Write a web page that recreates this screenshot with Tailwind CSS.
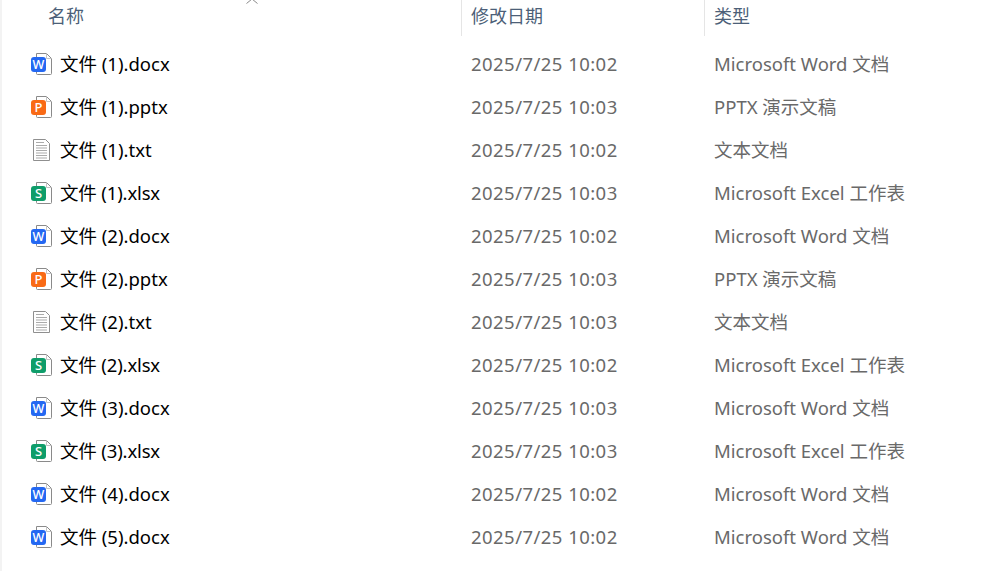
<!DOCTYPE html>
<html lang="zh"><head><meta charset="utf-8"><script src="https://cdn.jsdelivr.net/npm/@tailwindcss/browser@4"></script></head>
<body class="bg-white overflow-hidden">
<svg width="0" height="0" class="absolute">
<defs>
<symbol id="page" viewBox="0 0 22 24"><path d="M6.500 1.500H16.500L21.500 6.500V21.500a1 1 0 0 1-1 1H7.500a1 1 0 0 1-1-1Z" fill="#fff" stroke="#8a8a8a" stroke-width="1"/><path d="M16.500 1.500V6.500H21.500" fill="none" stroke="#c4c4c4" stroke-width="1"/></symbol>
<symbol id="txt" viewBox="0 0 22 24"><path d="M3.500 1.500H15.500L19.500 5.500V22.500H3.500Z" fill="#fff" stroke="#8f8f8f"/><path d="M6 4.500H14M6 7.500H17M6 10H17M6 12.500H17M6 15H17M6 17.500H17M6 20H17" stroke="#ababab" stroke-width="1"/></symbol>
</defs></svg>
<div class="relative w-[991px] h-[571px] overflow-hidden border-l-2 border-[#f3f3f3] font-['Noto_Sans','Noto_Sans_CJK_SC',sans-serif] text-[18.5px]">
<svg class="absolute left-[243px] top-0" width="14" height="4" viewBox="0 0 14 4"><path d="M1.500 3.500 7 -1 12.500 3.500" fill="none" stroke="#8a8a8a"/></svg>
<div class="flex h-[36px] text-[18px] text-[#4c5f78]">
<div class="w-[459px] pl-[46px] pt-[2px] leading-[28px]">名称</div>
<div class="w-[243px] border-l border-[#e5e5e5] pl-[9px] pt-[2px] leading-[28px]">修改日期</div>
<div class="flex-1 border-l border-[#e5e5e5] pl-[9px] pt-[2px] leading-[28px]">类型</div>
</div>
<div class="pt-[6px] text-[#696969]">
<div class="flex h-[43px] items-center"><div class="relative w-[22px] h-[24px] ml-[28px] mr-[8px]"><svg class="absolute inset-0" width="22" height="24"><use href="#page"/></svg><div class="absolute left-[1px] top-[5px] w-[15px] h-[15px] rounded-[3px] bg-[#2468f2] text-white text-[12.5px] font-medium leading-[15px] text-center">W</div></div><div class="w-[411px] text-black">文件 (1).docx</div><div class="w-[243px] tracking-[0.45px]">2025/7/25 10:02</div><div>Microsoft Word 文档</div></div>
<div class="flex h-[43px] items-center"><div class="relative w-[22px] h-[24px] ml-[28px] mr-[8px]"><svg class="absolute inset-0" width="22" height="24"><use href="#page"/></svg><div class="absolute left-[1px] top-[5px] w-[15px] h-[15px] rounded-[3px] bg-[#f96a16] text-white text-[13px] font-medium leading-[15px] text-center">P</div></div><div class="w-[411px] text-black">文件 (1).pptx</div><div class="w-[243px] tracking-[0.45px]">2025/7/25 10:03</div><div>PPTX 演示文稿</div></div>
<div class="flex h-[43px] items-center"><div class="relative w-[22px] h-[24px] ml-[28px] mr-[8px]"><svg class="absolute inset-0" width="22" height="24"><use href="#txt"/></svg></div><div class="w-[411px] text-black">文件 (1).txt</div><div class="w-[243px] tracking-[0.45px]">2025/7/25 10:02</div><div>文本文档</div></div>
<div class="flex h-[43px] items-center"><div class="relative w-[22px] h-[24px] ml-[28px] mr-[8px]"><svg class="absolute inset-0" width="22" height="24"><use href="#page"/></svg><div class="absolute left-[1px] top-[5px] w-[15px] h-[15px] rounded-[3px] bg-[#0f9d6a] text-white text-[13px] font-medium leading-[15px] text-center">S</div></div><div class="w-[411px] text-black tracking-[-0.15px]">文件 (1).xlsx</div><div class="w-[243px] tracking-[0.45px]">2025/7/25 10:03</div><div>Microsoft Excel 工作表</div></div>
<div class="flex h-[43px] items-center"><div class="relative w-[22px] h-[24px] ml-[28px] mr-[8px]"><svg class="absolute inset-0" width="22" height="24"><use href="#page"/></svg><div class="absolute left-[1px] top-[5px] w-[15px] h-[15px] rounded-[3px] bg-[#2468f2] text-white text-[12.5px] font-medium leading-[15px] text-center">W</div></div><div class="w-[411px] text-black">文件 (2).docx</div><div class="w-[243px] tracking-[0.45px]">2025/7/25 10:02</div><div>Microsoft Word 文档</div></div>
<div class="flex h-[43px] items-center"><div class="relative w-[22px] h-[24px] ml-[28px] mr-[8px]"><svg class="absolute inset-0" width="22" height="24"><use href="#page"/></svg><div class="absolute left-[1px] top-[5px] w-[15px] h-[15px] rounded-[3px] bg-[#f96a16] text-white text-[13px] font-medium leading-[15px] text-center">P</div></div><div class="w-[411px] text-black">文件 (2).pptx</div><div class="w-[243px] tracking-[0.45px]">2025/7/25 10:03</div><div>PPTX 演示文稿</div></div>
<div class="flex h-[43px] items-center"><div class="relative w-[22px] h-[24px] ml-[28px] mr-[8px]"><svg class="absolute inset-0" width="22" height="24"><use href="#txt"/></svg></div><div class="w-[411px] text-black">文件 (2).txt</div><div class="w-[243px] tracking-[0.45px]">2025/7/25 10:03</div><div>文本文档</div></div>
<div class="flex h-[43px] items-center"><div class="relative w-[22px] h-[24px] ml-[28px] mr-[8px]"><svg class="absolute inset-0" width="22" height="24"><use href="#page"/></svg><div class="absolute left-[1px] top-[5px] w-[15px] h-[15px] rounded-[3px] bg-[#0f9d6a] text-white text-[13px] font-medium leading-[15px] text-center">S</div></div><div class="w-[411px] text-black tracking-[-0.15px]">文件 (2).xlsx</div><div class="w-[243px] tracking-[0.45px]">2025/7/25 10:02</div><div>Microsoft Excel 工作表</div></div>
<div class="flex h-[43px] items-center"><div class="relative w-[22px] h-[24px] ml-[28px] mr-[8px]"><svg class="absolute inset-0" width="22" height="24"><use href="#page"/></svg><div class="absolute left-[1px] top-[5px] w-[15px] h-[15px] rounded-[3px] bg-[#2468f2] text-white text-[12.5px] font-medium leading-[15px] text-center">W</div></div><div class="w-[411px] text-black">文件 (3).docx</div><div class="w-[243px] tracking-[0.45px]">2025/7/25 10:03</div><div>Microsoft Word 文档</div></div>
<div class="flex h-[43px] items-center"><div class="relative w-[22px] h-[24px] ml-[28px] mr-[8px]"><svg class="absolute inset-0" width="22" height="24"><use href="#page"/></svg><div class="absolute left-[1px] top-[5px] w-[15px] h-[15px] rounded-[3px] bg-[#0f9d6a] text-white text-[13px] font-medium leading-[15px] text-center">S</div></div><div class="w-[411px] text-black tracking-[-0.15px]">文件 (3).xlsx</div><div class="w-[243px] tracking-[0.45px]">2025/7/25 10:03</div><div>Microsoft Excel 工作表</div></div>
<div class="flex h-[43px] items-center"><div class="relative w-[22px] h-[24px] ml-[28px] mr-[8px]"><svg class="absolute inset-0" width="22" height="24"><use href="#page"/></svg><div class="absolute left-[1px] top-[5px] w-[15px] h-[15px] rounded-[3px] bg-[#2468f2] text-white text-[12.5px] font-medium leading-[15px] text-center">W</div></div><div class="w-[411px] text-black">文件 (4).docx</div><div class="w-[243px] tracking-[0.45px]">2025/7/25 10:02</div><div>Microsoft Word 文档</div></div>
<div class="flex h-[43px] items-center"><div class="relative w-[22px] h-[24px] ml-[28px] mr-[8px]"><svg class="absolute inset-0" width="22" height="24"><use href="#page"/></svg><div class="absolute left-[1px] top-[5px] w-[15px] h-[15px] rounded-[3px] bg-[#2468f2] text-white text-[12.5px] font-medium leading-[15px] text-center">W</div></div><div class="w-[411px] text-black">文件 (5).docx</div><div class="w-[243px] tracking-[0.45px]">2025/7/25 10:02</div><div>Microsoft Word 文档</div></div>
</div>
</div>
</body></html>
